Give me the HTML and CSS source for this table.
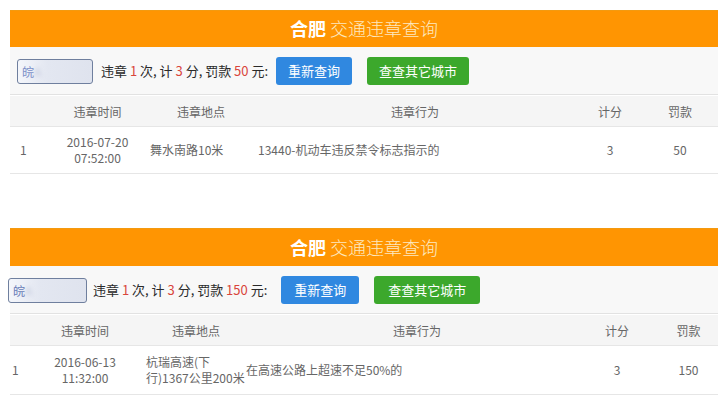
FILE: index.html
```html
<!DOCTYPE html>
<html lang="zh-CN">
<head>
<meta charset="utf-8">
<title>合肥 交通违章查询</title>
<link rel="stylesheet" href="styles.css">
</head>
<body>
<section class="panel panel-a">
  <header class="bar"><b>合肥</b> 交通违章查询</header>
  <div class="tools">
    <div class="plate">皖<span class="blur">A</span></div>
    <div class="summary">违章 <em>1</em> 次, 计 <em>3</em> 分, 罚款 <em>50</em> 元:</div>
    <button class="btn blue">重新查询</button>
    <button class="btn green">查查其它城市</button>
  </div>
  <div class="row head">
    <div class="c1"></div><div class="c2">违章时间</div><div class="c3">违章地点</div><div class="c4">违章行为</div><div class="c5">计分</div><div class="c6">罚款</div>
  </div>
  <div class="row data">
    <div class="c1 l">1</div><div class="c2">2016-07-20<br>07:52:00</div><div class="c3 l">舞水南路10米</div><div class="c4 l">13440-机动车违反禁令标志指示的</div><div class="c5">3</div><div class="c6">50</div>
  </div>
</section>

<section class="panel panel-b">
  <header class="bar"><b>合肥</b> 交通违章查询</header>
  <div class="tools">
    <div class="plate">皖<span class="blur">A</span></div>
    <div class="summary">违章 <em>1</em> 次, 计 <em>3</em> 分, 罚款 <em>150</em> 元:</div>
    <button class="btn blue">重新查询</button>
    <button class="btn green">查查其它城市</button>
  </div>
  <div class="row head">
    <div class="c1"></div><div class="c2">违章时间</div><div class="c3">违章地点</div><div class="c4">违章行为</div><div class="c5">计分</div><div class="c6">罚款</div>
  </div>
  <div class="row data">
    <div class="c1 l">1</div><div class="c2">2016-06-13<br>11:32:00</div><div class="c3 l">杭瑞高速(下行)1367公里200米</div><div class="c4 l">在高速公路上超速不足50%的</div><div class="c5">3</div><div class="c6">150</div>
  </div>
</section>
</body>
</html>
```
FILE: styles.css
```css
* { box-sizing: border-box; }
body {
  margin: 0;
  background: #fff;
  font-family: "Noto Sans CJK SC", "Noto Sans", sans-serif;
  color: #555;
}
.panel { margin-left: 10px; width: 708px; }
.panel-a { margin-top: 10px; }
.panel-b { margin-top: 54px; }

.bar {
  height: 37px;
  background: #ff9502;
  border-top: 1px solid #f39a10;
  color: #fde9c0;
  font-size: 18px;
  line-height: 35px;
  text-align: center;
  font-weight: 300;
}
.panel-b .bar { height: 38px; line-height: 36px; }
.bar b { color: #fff; font-weight: 700; }

.tools {
  height: 48px;
  display: flex;
  align-items: center;
  background: #f8f8f8;
  border-bottom: 1px solid #e2e2e2;
  padding-left: 7px;
}
.panel-b .tools { padding-left: 0; }
.plate {
  width: 76px;
  height: 25px;
  margin-top: 2px;
  border: 1px solid #6f7f9e;
  border-radius: 3px;
  background: linear-gradient(90deg, #f4f6fb 0%, #e3e7f1 40%, #dfe3ee 100%);
  font-size: 12px;
  line-height: 23px;
  padding-left: 4px;
  color: #7c8fc8;
  white-space: nowrap;
}
.panel-b .plate { margin-left: -2px; width: 79px; color: #6a7db8; }
.blur { color: transparent; text-shadow: 0 0 4px rgba(160,170,200,0.6); }
.summary {
  margin-left: 8px;
  font-size: 13px;
  color: #2a2a2a;
  font-weight: 400;
  white-space: nowrap;
}
.panel-b .summary { margin-left: 6px; }
.summary em { font-style: normal; color: #d9453c; }
.btn {
  height: 28px;
  border: none;
  border-radius: 3px;
  padding: 0 12px;
  font-family: inherit;
  font-size: 13px;
  color: #fff;
  cursor: pointer;
}
.blue { background: #3088e0; margin-left: 8px; }
.green { background: #3ca82c; margin-left: 15px; }
.panel-b .blue { margin-left: 14px; padding: 0 13px; }
.panel-b .green { margin-left: 15px; padding: 0 14px; }

.row {
  display: grid;
  font-size: 12px;
  color: #666;
  text-align: center;
  align-items: center;
}
.panel-a .row { grid-template-columns: 45px 85px 112px 320px 76px 64px; }
.panel-b .row { grid-template-columns: 35px 80px 121px 342px 58px 72px; }
.head {
  height: 31px;
  background: #f5f5f5;
  border-bottom: 1px solid #e6e6e6;
  margin-top: 1px;
}
.data {
  height: 47px;
  border-bottom: 1px solid #e6e6e6;
  line-height: 16px;
}
.panel-b .data { height: 49px; }
.l { text-align: left; }
.panel-a .c1 { padding-left: 10px; }
.panel-a .c3 { padding-left: 10px; }
.panel-a .c4 { padding-left: 6px; }
.panel-b .c1 { padding-left: 2px; }
.panel-b .c3 { padding-left: 21px; }
.panel-b .c6 { padding-left: 13px; }
```
